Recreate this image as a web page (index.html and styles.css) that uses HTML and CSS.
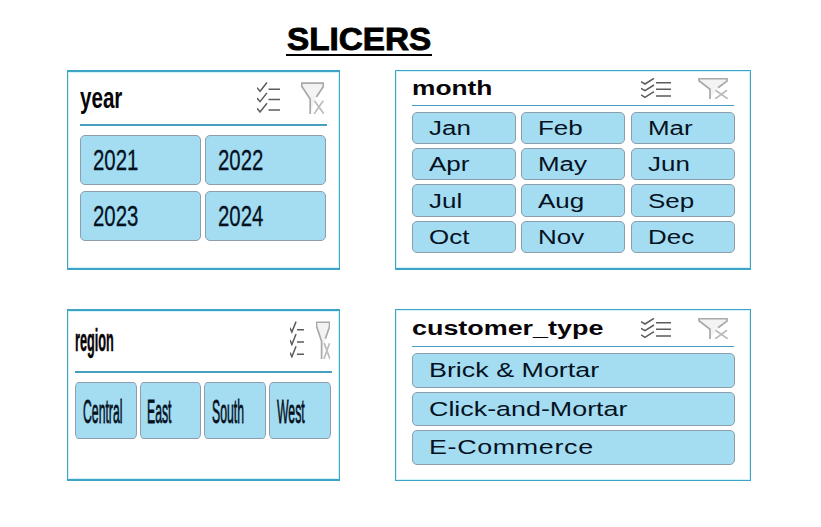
FILE: index.html
```html
<!DOCTYPE html>
<html lang="en">
<head>
<meta charset="utf-8">
<title>Slicers</title>
<link rel="stylesheet" href="styles.css">
</head>
<body>
<svg class="defs" aria-hidden="true">
  <symbol id="multi" viewBox="0 0 30 30" preserveAspectRatio="none">
    <g class="ticks">
      <path d="M0 5.5 L4 9 L13 0.5 M0 15.5 L4 19 L13 10.5 M0 25.5 L4 29 L13 20.5"/>
      <path d="M15 7 H30 M15 17 H30 M15 27 H30"/>
    </g>
  </symbol>
  <symbol id="clear" viewBox="0 0 30 30" preserveAspectRatio="none">
    <path class="funnel" d="M12 30 V16 L1 4 V1 H29 V4.5 L20 14"/>
    <path class="cross" d="M17.5 17.5 L30 30 M29 17.5 L17 30"/>
  </symbol>
</svg>
<h1 class="title"><span class="label">SLICERS</span></h1>
<main class="board">
  <section class="slicer year">
    <header class="head"><h2 class="label">year</h2><svg class="icon multi"><use href="#multi"/></svg><svg class="icon clear"><use href="#clear"/></svg></header>
    <div class="items">
      <div class="item"><span class="label">2021</span></div>
      <div class="item"><span class="label">2022</span></div>
      <div class="item"><span class="label">2023</span></div>
      <div class="item"><span class="label">2024</span></div>
    </div>
  </section>
  <section class="slicer month">
    <header class="head"><h2 class="label">month</h2><svg class="icon multi"><use href="#multi"/></svg><svg class="icon clear"><use href="#clear"/></svg></header>
    <div class="items">
      <div class="item"><span class="label">Jan</span></div>
      <div class="item"><span class="label">Feb</span></div>
      <div class="item"><span class="label">Mar</span></div>
      <div class="item"><span class="label">Apr</span></div>
      <div class="item"><span class="label">May</span></div>
      <div class="item"><span class="label">Jun</span></div>
      <div class="item"><span class="label">Jul</span></div>
      <div class="item"><span class="label">Aug</span></div>
      <div class="item"><span class="label">Sep</span></div>
      <div class="item"><span class="label">Oct</span></div>
      <div class="item"><span class="label">Nov</span></div>
      <div class="item"><span class="label">Dec</span></div>
    </div>
  </section>
  <section class="slicer region">
    <header class="head"><h2 class="label">region</h2><svg class="icon multi"><use href="#multi"/></svg><svg class="icon clear"><use href="#clear"/></svg></header>
    <div class="items">
      <div class="item"><span class="label">Central</span></div>
      <div class="item"><span class="label">East</span></div>
      <div class="item"><span class="label">South</span></div>
      <div class="item"><span class="label">West</span></div>
    </div>
  </section>
  <section class="slicer customer">
    <header class="head"><h2 class="label">customer_type</h2><svg class="icon multi"><use href="#multi"/></svg><svg class="icon clear"><use href="#clear"/></svg></header>
    <div class="items">
      <div class="item"><span class="label">Brick &amp; Mortar</span></div>
      <div class="item"><span class="label">Click-and-Mortar</span></div>
      <div class="item"><span class="label wide">E-Commerce</span></div>
    </div>
  </section>
</main>
</body>
</html>
```

FILE: styles.css
```css
* { box-sizing: border-box; margin: 0; }
body {
  width: 821px;
  height: 527px;
  overflow: hidden;
  background: #fff;
  color: #04121f;
  font-family: "Liberation Sans", Arial, sans-serif;
}
.defs { display: block; width: 0; height: 0; }

.title {
  width: 146px;
  height: 32px;
  margin: 24px 0 14px 286px;
  padding-left: 1px;
  border-bottom: 2px solid #000;
  color: #000;
  font-size: 32px;
  line-height: 30px;
}
.title .label {
  transform: scaleX(1.04);
  -webkit-text-stroke: 0.9px #000;
  stroke-linejoin: round;
}

.board {
  display: grid;
  grid-template: 200px 172px / 273px 356px;
  gap: 39px 55px;
  padding-left: 67px;
}

.label {
  display: block;
  width: max-content;
  white-space: nowrap;
  transform-origin: left center;
}

.slicer {
  border: 1px solid #3fa3c6;
  border-bottom-width: 2px;
  box-shadow: inset 0 0 0 1px #d3f3fa;
}
.head {
  display: flex;
  align-items: center;
  border-bottom: 1px solid #459fc0;
}
.head .label { margin-right: auto; width: 0; color: #080408; }
.head .icon { flex: none; display: block; overflow: visible; }
.items { display: grid; }
.item {
  display: flex;
  align-items: center;
  min-width: 0;
  border: 1px solid #8d9dab;
  border-radius: 5px;
  background: #a4dcf2;
}

.ticks, .funnel, .cross { fill: none; stroke: #5c5c5c; stroke-width: 1.5px; }
.ticks path, .funnel, .cross { vector-effect: non-scaling-stroke; }
.funnel { fill: #f3f3f3; stroke: #a9a9a9; stroke-width: 1.7px; }
.cross { stroke: #bcbcbc; stroke-width: 1.7px; }

.year { border-top-width: 2px; padding: 0 12px; }
.year .head { height: 54px; border-bottom-width: 2px; }
.year .head .label { font-size: 29px; transform: scaleX(0.71); }
.year .multi { width: 23px; height: 31px; margin: 0 21px 2px 0; }
.year .clear { width: 23px; height: 32px; margin: 0 3px 1px 0; }
.year .items { grid-template: 50px 50px / 121px 121px; gap: 6px 4px; padding-top: 9px; }
.year .item { padding: 0 0 0 12px; }
.year .item .label { font-size: 30px; transform: scaleX(0.68); -webkit-text-stroke: 0.3px; }

.month { padding: 0 16px; }
.month .head { height: 35px; }
.month .head .label { font-size: 19.5px; transform: scaleX(1.35); }
.month .multi, .customer .multi { width: 30px; height: 20px; margin: 0 27px 1px 0; }
.month .clear, .customer .clear { width: 30px; height: 21px; margin-right: 6px; }
.month .items { grid-template: repeat(4, 32.5px) / repeat(3, 104px); gap: 3.9px 5.3px; padding-top: 5.5px; }
.month .item { padding: 1.5px 0 0 16px; }
.month .item .label { font-size: 19.5px; transform: scaleX(1.33); }

.region { border-top-width: 2px; padding: 0 7px; }
.region .head { height: 62px; border-bottom-width: 2px; }
.region .head .label { font-size: 31px; transform: scaleX(0.41); -webkit-text-stroke: 0.5px; }
.region .multi { width: 14px; height: 37px; margin: 0 12px 3px 0; }
.region .clear { width: 14px; height: 38px; margin: 0 2px 3px 0; }
.region .items { grid-template: 57px / repeat(4, 61.7px); gap: 3px; padding-top: 9px; }
.region .item { padding: 1px 0 0 6.5px; border-radius: 3.5px / 6px; }
.region .item .label { font-size: 34px; transform: scaleX(0.36); -webkit-text-stroke: 0.8px; }

.customer { border-bottom-width: 1px; padding: 0 16px; }
.customer .head { height: 37px; }
.customer .head .label { font-size: 20px; transform: scaleX(1.345); }
.customer .items { grid-template: repeat(3, 34.5px) / 323px; gap: 4px; padding-top: 6px; }
.customer .item { padding: 0 0 0 16px; }
.customer .item .label { font-size: 20.5px; transform: scaleX(1.31); }
.customer .item .wide { letter-spacing: 0.5px; }
```
